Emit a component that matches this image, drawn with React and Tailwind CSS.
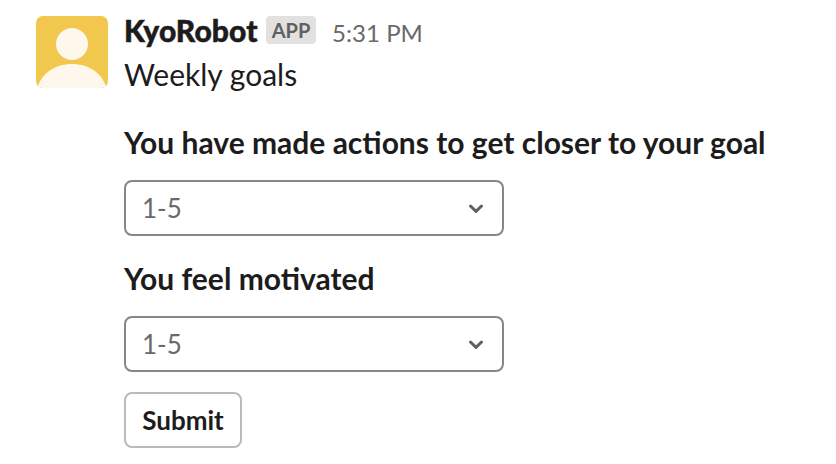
function Avatar() {
  return (
    <svg className="block size-[72px] shrink-0" viewBox="0 0 72 72">
      <defs>
        <clipPath id="avatar-frame">
          <rect width="72" height="72" rx="7" />
        </clipPath>
      </defs>
      <g clipPath="url(#avatar-frame)">
        <rect width="72" height="72" fill="#f2c74e" />
        <circle cx="36" cy="28" r="16" fill="#fdf8eb" />
        <path d="M0 72L2.500 69C7 57 19 48 36 48s29 9 33.500 21L72 72z" fill="#fdf8eb" />
      </g>
    </svg>
  );
}

function Select() {
  return (
    <div className="flex h-14 w-[380px] items-center justify-between rounded-[8px] border-2 border-[#868686] bg-white pr-[18px] pl-4 text-[26px] text-[#696969]">
      <span>1-5</span>
      <svg className="size-4" viewBox="0 0 16 16" fill="none" stroke="#616061" strokeWidth="3" strokeLinecap="round" strokeLinejoin="round">
        <path d="M2.500 6 8 11.300l5.500-5.300" />
      </svg>
    </div>
  );
}

export default function App() {
  return (
    <main className="flex h-[464px] w-[836px] gap-4 overflow-hidden bg-white pt-4 pl-9 font-['Lato',sans-serif] text-[30px] text-[#1d1c1d]">
      <Avatar />
      <div className="whitespace-nowrap">
        <header className="flex h-7 items-start">
          <span className="w-[134px] leading-7 font-black tracking-[0.1px] [-webkit-text-stroke:0.5px_#1d1c1d]">KyoRobot</span>
          <span className="ml-2 flex h-7 w-[50px] items-center justify-center rounded-[4px] bg-[#e1e1e1] text-[20px] font-bold text-[#616061]">APP</span>
          <span className="ml-4 pt-px text-[24px] leading-8 tracking-[0.05px] text-[#696969]">5:31 PM</span>
        </header>
        <p className="mt-3.5 h-8 leading-8">Weekly goals</p>
        <h2 className="mt-9 h-8 leading-8 font-bold">You have made actions to get closer to your goal</h2>
        <div className="mt-[22px]"><Select /></div>
        <h2 className="mt-[26px] h-8 leading-8 font-bold">You feel motivated</h2>
        <div className="mt-[22px]"><Select /></div>
        <button className="mt-5 flex h-14 w-[118px] items-center justify-center rounded-[8px] border-2 border-[#bbbabb] text-[26px] font-bold">Submit</button>
      </div>
    </main>
  );
}
